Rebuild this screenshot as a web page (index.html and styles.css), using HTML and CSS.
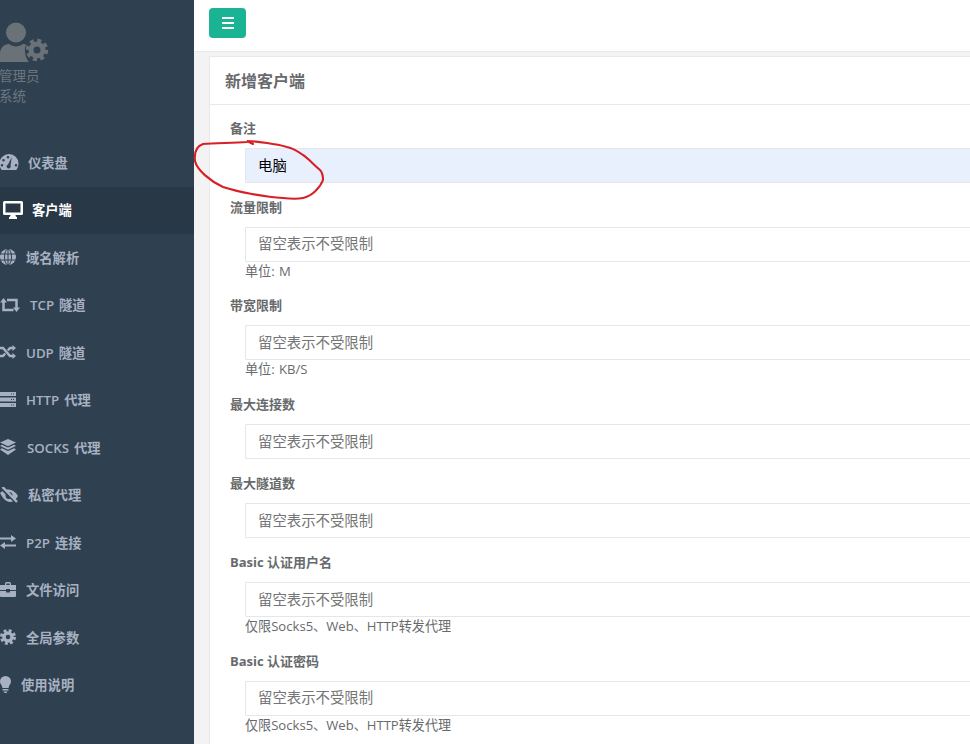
FILE: index.html
```html
<!DOCTYPE html>
<html lang="zh">
<head>
<meta charset="utf-8">
<title>新增客户端</title>
<link rel="stylesheet" href="styles.css">
</head>
<body>
<div class="app">
  <aside class="sidebar">
    <div class="profile">
      <svg class="avatar" width="50" height="42" viewBox="0 0 50 42">
        <circle cx="16" cy="10.500" r="10" fill="#6b7277"/>
        <path d="M0 40v-8c0-6 4-10 9-10 2 1.500 4.500 2.500 7 2.500s5-1 7-2.500c1 0 2.500.2 3.500.7-1.500 2-2 4-1.500 7 .5 4 1 7 4 10.300z" fill="#6b7277"/>
        <circle cx="37" cy="28" r="6" fill="none" stroke="#6b7277" stroke-width="5"/>
        <circle cx="37" cy="28" r="9.500" fill="none" stroke="#6b7277" stroke-width="3.500" stroke-dasharray="4 3.460"/>
      </svg>
      <div class="profile-name">管理员</div>
      <div class="profile-role">系统</div>
    </div>
    <nav class="menu">
      <a class="item"><svg class="ic i-dash" width="20" height="16" viewBox="0 0 20 16"><path fill-rule="evenodd" d="M10 0a9.500 9.500 0 0 1 9.500 9.500c0 2.500-.8 4.700-2.200 6.500H2.700A9.500 9.500 0 0 1 .5 9.500 9.500 9.500 0 0 1 10 0zM9 2a1.300 1.300 0 1 0 0 2.600A1.300 1.300 0 0 0 9 2zM4.500 5a1.300 1.300 0 1 0 0 2.600 1.300 1.300 0 0 0 0-2.600zM3 10a1.300 1.300 0 1 0 0 2.600A1.300 1.300 0 0 0 3 10zM17 10a1.300 1.300 0 1 0 0 2.600 1.300 1.300 0 0 0 0-2.600zM12.800 3 9 10.500a2 2 0 1 0 2.500 1z"/></svg><span>仪表盘</span></a>
      <a class="item active"><svg class="ic i-mon" width="20" height="18" viewBox="0 0 20 18"><path fill-rule="evenodd" d="M1.500 0h17A1.500 1.500 0 0 1 20 1.500v11a1.500 1.500 0 0 1-1.500 1.500H12.500c0 1 .5 1.500 1.500 2.500V18H6v-1.500c1-1 1.500-1.500 1.500-2.500H1.500A1.500 1.500 0 0 1 0 12.500v-11A1.500 1.500 0 0 1 1.500 0zM2.500 2.500v9h15v-9z"/></svg><span>客户端</span></a>
      <a class="item"><svg class="ic i-globe" width="16" height="16" viewBox="0 0 16 16"><circle cx="8" cy="8" r="8"/><g class="cut"><ellipse cx="8" cy="8" rx="3.500" ry="8"/><path d="M0 5h16M0 11h16M8 0v16"/></g></svg><span>域名解析</span></a>
      <a class="item"><svg class="ic i-tcp" width="20" height="14" viewBox="0 0 20 14"><path d="M3.500 0 7 4.500H0zM13 9.500h7L16.500 14z"/><g class="line"><path d="M3.500 4v8h10M7 2h9.500v8"/></g></svg><span>TCP 隧道</span></a>
      <a class="item"><svg class="ic i-udp" width="16" height="14" viewBox="0 0 16 14"><path d="M12.500 0 16 3l-3.500 3zM12.500 8l3.500 3-3.500 3z"/><g class="line"><path d="M0 3h3l7 8h3M0 11h3l2.200-2.500M7.800 5.500 10 3h3"/></g></svg><span>UDP 隧道</span></a>
      <a class="item"><svg class="ic i-http" width="16" height="15" viewBox="0 0 16 15"><path fill-rule="evenodd" d="M0 0h16v4H0zM0 5.500h16v4H0zM0 11h16v4H0zM11 1.500v1h1v-1zM13 1.500v1h1v-1zM11 7v1h1V7zM13 7v1h1V7zM11 12.500v1h1v-1zM13 12.500v1h1v-1z"/></svg><span>HTTP 代理</span></a>
      <a class="item"><svg class="ic i-layers" width="16" height="16" viewBox="0 0 16 16"><path d="M8 0l8 3.600L8 7.200 0 3.600zM1.800 5.800 8 8.600l6.200-2.800L16 7l-8 3.700L0 7zM1.800 9.200 8 12l6.200-2.800 1.800 1.200-8 5.600-8-5.600z"/></svg><span>SOCKS 代理</span></a>
      <a class="item"><svg class="ic i-eye" width="18" height="16" viewBox="0 0 18 16"><path fill-rule="evenodd" d="M0 6C3 3 6 2 9 2.500c4 .5 7 3 9 6.500-2.500 4-5 6-8 6-4 0-7-3.500-10-9zM9 5a3.500 3.500 0 1 0 0 7 3.500 3.500 0 0 0 0-7z"/><path class="cutthick" d="M1 1 16 15.500"/><path class="line" d="M2.500 0 17 15"/></svg><span>私密代理</span></a>
      <a class="item"><svg class="ic i-p2p" width="16" height="14" viewBox="0 0 16 14"><path d="M11 0l5 3.500L11 7V4.500H0v-2h11zM5 7v2.500h11v2H5V14l-5-3.500z"/></svg><span>P2P 连接</span></a>
      <a class="item"><svg class="ic i-case" width="16" height="15" viewBox="0 0 16 15"><path fill-rule="evenodd" d="M5 3V1.500A1.500 1.500 0 0 1 6.500 0h3A1.500 1.500 0 0 1 11 1.500V3h5v5H10V7H6v1H0V3zM6.300 1.500V3h3.400V1.500zM0 9h6v1.500h4V9h6v5a1 1 0 0 1-1 1H1a1 1 0 0 1-1-1z"/></svg><span>文件访问</span></a>
      <a class="item"><svg class="ic i-cog" width="16" height="16" viewBox="0 0 16 16"><circle class="ring" cx="8" cy="8" r="4"/><circle class="teeth" cx="8" cy="8" r="6.500"/></svg><span>全局参数</span></a>
      <a class="item"><svg class="ic i-bulb" width="11" height="17" viewBox="0 0 11 17"><path d="M5.500 0A5.500 5.500 0 0 1 11 5.500c0 2.500-2 3.500-2.500 6.500h-6C2 9 0 8 0 5.500A5.500 5.500 0 0 1 5.500 0zM2.500 13h6v1.500h-6zM3.500 15.500h4L6.500 17h-2z"/></svg><span>使用说明</span></a>
    </nav>
  </aside>
  <main class="main">
    <header class="topbar">
      <button class="toggle" type="button" aria-label="menu">
        <span></span><span></span><span></span>
      </button>
    </header>
    <section class="card">
      <h5 class="card-title">新增客户端</h5>
      <form class="card-body">
        <div class="group"><label>备注</label><div class="field"><input class="input filled" value="电脑"></div></div>
        <div class="group"><label>流量限制</label><div class="field"><input class="input" placeholder="留空表示不受限制"><div class="help">单位: M</div></div></div>
        <div class="group"><label>带宽限制</label><div class="field"><input class="input" placeholder="留空表示不受限制"><div class="help">单位: KB/S</div></div></div>
        <div class="group"><label>最大连接数</label><div class="field"><input class="input" placeholder="留空表示不受限制"></div></div>
        <div class="group"><label>最大隧道数</label><div class="field"><input class="input" placeholder="留空表示不受限制"></div></div>
        <div class="group"><label>Basic 认证用户名</label><div class="field"><input class="input" placeholder="留空表示不受限制"><div class="help">仅限Socks5、Web、HTTP转发代理</div></div></div>
        <div class="group"><label>Basic 认证密码</label><div class="field"><input class="input" placeholder="留空表示不受限制"><div class="help">仅限Socks5、Web、HTTP转发代理</div></div></div>
      </form>
    </section>
  </main>
  <svg class="scribble" width="140" height="70" viewBox="190 135 140 70"><path d="M247 142C232 143 215 143 203 144 197 146 194 152 195 161 197 170 210 181 223 187 238 192 265 197 283 198 292 199 298 199 303 198 312 196 320 188 323 180 323 175 322 172 320 170 313 164 308 158 303 155 296 150 292 148 287 147 280 145 274 144 267 143 260 142 253 141 247 141L253 144" fill="none" stroke="#d91f26" stroke-width="2.100" stroke-linecap="round"/></svg>
</div>
</body>
</html>
```

FILE: styles.css
```css
* { box-sizing: border-box; }
html, body { margin: 0; height: 100%; overflow: hidden; }
body {
  font-family: "Open Sans", "Noto Sans CJK SC", sans-serif;
  font-size: 13px;
  color: #676a6c;
  background: #f3f3f4;
}
.app { display: flex; width: 970px; height: 744px; position: relative; overflow: hidden; }

.sidebar { width: 194px; flex: none; background: #2f4050; color: #a7b1c2; }
.profile { height: 139px; padding-top: 22px; color: #6d767e; font-size: 13.500px; }
.avatar { display: block; margin-bottom: 2px; }
.profile-name { line-height: 20px; margin-left: -1px; }
.profile-role { line-height: 20px; margin-left: -1px; }
.menu { display: flex; flex-direction: column; }
.item {
  display: flex;
  align-items: center;
  height: 47.500px;
  padding-bottom: 1px;
  font-weight: 600;
  font-size: 13.300px;
  word-spacing: 1.500px;
  white-space: nowrap;
}
.item svg { flex: none; fill: currentColor; }
.item.active { background: #293846; color: #fff; }
.cut { fill: none; stroke: #2f4050; stroke-width: 1; }
.line { fill: none; stroke: currentColor; stroke-width: 2.500; }
.cutthick { fill: none; stroke: #2f4050; stroke-width: 2.500; }
.ring { fill: none; stroke: currentColor; stroke-width: 3.500; }
.teeth { fill: none; stroke: currentColor; stroke-width: 3; stroke-dasharray: 2.800 2.300; }
.i-dash { margin: 0 9px 0 -1px; }
.i-mon { margin: 0 9px 0 3px; }
.i-globe, .i-tcp, .i-udp, .i-http, .i-eye, .i-p2p, .i-case, .i-cog, .i-bulb { margin: 0 10px 0 0; }
.i-layers { margin: 0 11px 0 0; }

.main { flex: 1; min-width: 0; }
.topbar { height: 52px; background: #fff; border-bottom: 1px solid #e7eaec; padding: 8px 15px; }
.toggle {
  display: flex;
  flex-direction: column;
  justify-content: center;
  gap: 3px;
  align-items: center;
  width: 37px;
  height: 30px;
  padding: 0;
  border: 0;
  border-radius: 4px;
  background: #1ab394;
}
.toggle span { display: block; width: 12px; height: 2px; background: #fff; }

.card { margin: 4px 0 0 15px; width: 800px; background: #fff; border-left: 1px solid #e7eaec; border-top: 1px solid #e7eaec; }
.card-title {
  margin: 0;
  height: 48px;
  padding: 0 15px;
  font-size: 16px;
  font-weight: 600;
  line-height: 49px;
  border-bottom: 1px solid #e7eaec;
}
.card-body { padding: 12.700px 20px 60px; }
.group { margin-bottom: 14px; }
.group label { display: block; font-weight: 700; font-size: 13px; line-height: 20px; margin-bottom: 10px; }
.field { padding-left: 15px; }
.input {
  display: block;
  width: 100%;
  height: 35px;
  padding: 0 12px 1px;
  font: inherit;
  font-size: 14.400px;
  color: #000;
  background: #fff;
  border: 1px solid #e5e6e7;
  outline: 0;
  border-radius: 1px;
}
.input::placeholder { color: #757575; opacity: 1; }
.input.filled { background: #e8f0fe; }
.help { font-size: 13.100px; word-spacing: 1px; line-height: 19.650px; }
.scribble { position: absolute; left: 190px; top: 135px; }
```
